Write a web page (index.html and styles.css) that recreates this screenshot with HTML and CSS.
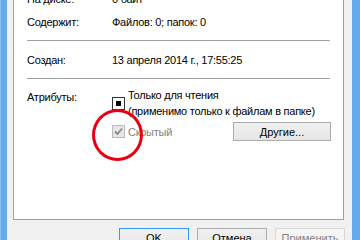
FILE: index.html
```html
<!doctype html>
<html lang="ru">
<head>
	<meta charset="UTF-8">
	<title>Свойства: папка</title>
	<link rel="stylesheet" href="styles.css">
</head>
<body>
	<div class="frame">
		<div class="edge"></div>
		<div class="dialog">
			<div class="panel">
				<div class="row row-top">
					<span class="label">На диске:</span>
					<span class="value">0 байт</span>
				</div>
				<div class="row row-next">
					<span class="label">Содержит:</span>
					<span class="value">Файлов: 0; папок: 0</span>
				</div>
				<div class="sep"></div>
				<div class="row">
					<span class="label">Создан:</span>
					<span class="value">13 апреля 2014 г., 17:55:25</span>
				</div>
				<div class="sep"></div>
				<div class="row attrs">
					<span class="label">Атрибуты:</span>
					<div class="value">
						<div class="check">
							<span class="box box-mixed"></span>
							<span class="check-text">Только для чтения<br>(применимо только к файлам в папке)</span>
						</div>
						<div class="check check-hidden">
							<span class="box box-off">
								<svg width="9" height="9" viewBox="0 0 9 9"><path d="M1 4.5 L3.5 7 L8 1.5" fill="none" stroke="#8a8a8a" stroke-width="1.8"/></svg>
							</span>
							<span class="check-text muted">Скрытый</span>
							<button class="btn btn-more">Другие...</button>
						</div>
					</div>
				</div>
				<span class="mark"></span>
			</div>
			<div class="buttons">
				<button class="btn btn-default">OK</button>
				<button class="btn">Отмена</button>
				<button class="btn btn-disabled">Применить</button>
			</div>
		</div>
		<div class="edge edge-right"></div>
	</div>
</body>
</html>
```
FILE: styles.css
```css
html, body {
	margin: 0;
	padding: 0;
}
body {
	width: 360px;
	height: 240px;
	overflow: hidden;
	background: #f0f0f0;
	font-family: "Liberation Sans", Arial, sans-serif;
	font-size: 11px;
	letter-spacing: -0.25px;
	color: #000;
}
.frame {
	display: flex;
	height: 240px;
}
.edge {
	width: 7px;
	background: #64aaec;
	border-left: 1px solid #8cc0f2;
	box-sizing: border-box;
}
.edge-right {
	width: 8px;
	border-left: none;
}
.dialog {
	flex: 1;
	padding: 0 8px 0 6px;
}
.panel {
	display: flow-root;
	position: relative;
	background: #fff;
	border: 1px solid #a0a0a0;
	border-top: none;
	padding: 0 13px;
	height: 220px;
	box-sizing: border-box;
}
.row {
	display: grid;
	grid-template-columns: 85px 1fr;
	line-height: 16px;
	margin-top: 11px;
}
.row-top {
	margin-top: -9px;
}
.row-next {
	margin-top: 7px;
}
.sep {
	height: 1px;
	background: #a0a0a0;
	margin: 10px 0 0;
}
.attrs {
	margin-top: 8px;
}
.attrs .label {
	padding-top: 2px;
}
.check {
	display: flex;
	align-items: flex-start;
}
.box {
	width: 13px;
	height: 13px;
	box-sizing: border-box;
	margin: 0 3px 0 0;
	flex: none;
	display: flex;
	align-items: center;
	justify-content: center;
}
.box-mixed {
	border: 1px solid #333;
	background: #fff;
	margin-top: 10px;
}
.box-mixed::after {
	content: "";
	width: 5px;
	height: 5px;
	background: #000;
}
.box-off {
	border: 1px solid #bcbcbc;
	background: #e6e6e6;
}
.check-hidden {
	margin-top: 3px;
	align-items: center;
}
.muted {
	color: #838383;
}
.btn {
	font: inherit;
	color: #000;
	background: linear-gradient(#f0f0f0, #e5e5e5);
	border: 1px solid #acacac;
	border-radius: 0;
	padding: 0 0 4px;
	height: 23px;
	width: 70px;
}
.btn-more {
	margin-left: auto;
	margin-right: -1px;
	width: 98px;
	height: 19px;
	line-height: 16px;
	padding: 0;
}
.btn-default {
	border-color: #3399ff;
}
.btn-disabled {
	color: #838383;
	border-color: #d9d9d9;
	background: #f4f4f4;
}
.buttons {
	display: flex;
	justify-content: flex-end;
	gap: 8px;
	margin-top: 8px;
	margin-right: -1px;
}
.mark {
	position: absolute;
	left: 78px;
	top: 109px;
	width: 51px;
	height: 52px;
	border: 3px solid #e60012;
	border-radius: 50%;
	box-sizing: border-box;
}
```
